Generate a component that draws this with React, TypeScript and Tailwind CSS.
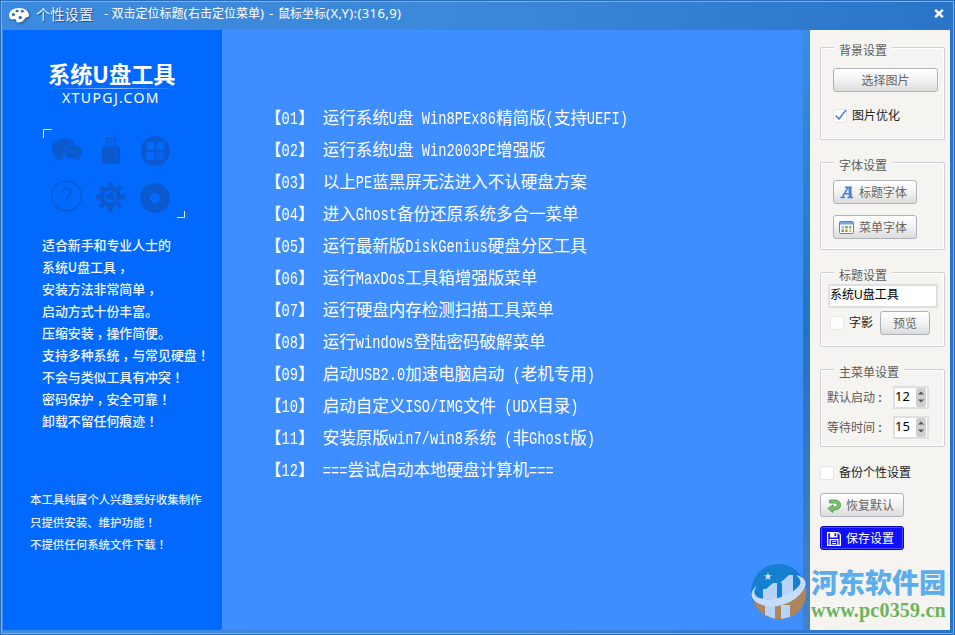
import { useState } from "react";
import type { ReactNode } from "react";
import clsx from "clsx";

const MENU_ITEMS = [
  "运行系统U盘 Win8PEx86精简版(支持UEFI)",
  "运行系统U盘 Win2003PE增强版",
  "以上PE蓝黑屏无法进入不认硬盘方案",
  "进入Ghost备份还原系统多合一菜单",
  "运行最新版DiskGenius硬盘分区工具",
  "运行MaxDos工具箱增强版菜单",
  "运行硬盘内存检测扫描工具菜单",
  "运行windows登陆密码破解菜单",
  "启动USB2.0加速电脑启动 (老机专用)",
  "启动自定义ISO/IMG文件 (UDX目录)",
  "安装原版win7/win8系统 (非Ghost版)",
  "===尝试启动本地硬盘计算机===",
];

const INTRO = [
  "适合新手和专业人士的",
  "系统U盘工具，",
  "安装方法非常简单，",
  "启动方式十份丰富。",
  "压缩安装，操作简便。",
  "支持多种系统，与常见硬盘！",
  "不会与类似工具有冲突！",
  "密码保护，安全可靠！",
  "卸载不留任何痕迹！",
];

const NOTES = [
  "本工具纯属个人兴趣爱好收集制作",
  "只提供安装、维护功能！",
  "不提供任何系统文件下载！",
];

export default function App() {
  const [optimize, setOptimize] = useState(true);
  const [shadow, setShadow] = useState(false);
  const [backup, setBackup] = useState(false);
  const [title, setTitle] = useState("系统U盘工具");
  const [bootIndex, setBootIndex] = useState(12);
  const [timeout, setTimeout] = useState(15);

  return (
    <div className="relative flex h-[635px] w-[955px] flex-col overflow-hidden border border-[#2a6db8] bg-linear-to-r from-[#3c8be0] via-[#3c88d8] to-[#2a74c8] font-['Liberation_Sans','Noto_Sans_CJK_SC',sans-serif] text-xs">
      <div className="flex h-[633px] flex-col border border-[#6cb2f6] pr-[2px] pb-[2px] pl-px">
        <TitleBar />
        <div className="flex h-[600px]">
          <Banner />
          <MenuPreview />
          <div className="w-[7px] shrink-0 bg-linear-to-b from-[#3b8ce2] via-[#2272c6] to-[#4482c4]" />
          <aside className="flex w-[140px] shrink-0 flex-col items-start bg-[#f5f4f1] pt-[17px] pl-[10px] text-[#5c5c5c]">
            <Group title="背景设置" className="h-[93px]">
              <div className="flex flex-col gap-[17px] pt-[8px] pl-[11px]">
                <PushButton className="w-[105px] justify-center">选择图片</PushButton>
                <CheckBox label="图片优化" checked={optimize} onChange={setOptimize} />
              </div>
            </Group>
            <Group title="字体设置" className="mt-[22px] h-[88px]">
              <div className="flex flex-col gap-[11px] pt-[5px] pl-[11px]">
                <PushButton className="w-[84px]" icon={<LetterIcon />}>
                  标题字体
                </PushButton>
                <PushButton className="w-[84px]" icon={<TableIcon />}>
                  菜单字体
                </PushButton>
              </div>
            </Group>
            <Group title="标题设置" className="mt-[22px] h-[75px]">
              <input
                value={title}
                onChange={(e) => setTitle(e.target.value)}
                aria-label="标题"
                className="mt-[-1px] ml-[6px] block h-6 w-[110px] border-2 border-[#dfdfdf] bg-white pb-[6px] text-xs text-black outline-none"
              />
              <div className="mt-[3px] flex items-center gap-[7px] pl-[8px]">
                <CheckBox label="字影" checked={shadow} onChange={setShadow} />
                <PushButton className="w-[50px] justify-center">预览</PushButton>
              </div>
            </Group>
            <Group title="主菜单设置" className="mt-[22px] h-[78px]">
              <div className="flex flex-col gap-[6px] pt-[3px] pl-[5px]">
                <SpinRow label="默认启动" value={bootIndex} onChange={setBootIndex} />
                <SpinRow label="等待时间" value={timeout} onChange={setTimeout} />
              </div>
            </Group>
            <div className="mt-[19px]">
              <CheckBox label="备份个性设置" checked={backup} onChange={setBackup} />
            </div>
            <PushButton className="mt-[13px] w-[84px]" icon={<RestoreIcon />}>
              恢复默认
            </PushButton>
            <PushButton className="mt-[9px] w-[84px]" icon={<SaveIcon />} primary>
              保存设置
            </PushButton>
          </aside>
        </div>
      </div>
      <Watermark />
    </div>
  );
}

function TitleBar() {
  return (
    <header className="flex h-[28px] shrink-0 items-center text-white">
      <svg viewBox="0 0 22 16" className="mt-[-3px] ml-[5px] h-4 w-[22px] drop-shadow-[1px_1px_1px_#1c4f8c]">
        <path
          fillRule="evenodd"
          fill="#fff"
          d="M11 1C5 1 1 4 1 8.500c0 2.500 1.500 4 3.500 4 1.500 0 2.500-.7 3.500.3.800 1-.3 2 1.500 2.600 2.500.6 6-.9 7.500-3.900.8-1.700 4-.9 4-3C21 4 17 1 11 1ZM4 7.500a1.500 1.500 0 1 0 3 0 1.500 1.500 0 1 0-3 0ZM7.500 4a1.600 1.300 0 1 0 3.200 0 1.600 1.300 0 1 0-3.200 0ZM12.700 4.300a1.600 1.300 0 1 0 3.200 0 1.600 1.300 0 1 0-3.200 0ZM10.500 10.500a1.700 1.600 0 1 0 3.400 0 1.700 1.600 0 1 0-3.400 0Z"
        />
      </svg>
      <span className="mt-[-2px] ml-[6px] text-[14.3px] leading-none text-[#e6f1fd] [text-shadow:1px_1px_1px_#1d4e8a]">
        个性设置
      </span>
      <span className="mt-[-5px] ml-[11px] flex items-center font-['Noto_Sans','Noto_Sans_CJK_SC',sans-serif] text-[12px] leading-none whitespace-pre">
        <span className="tracking-[0.2px]">- </span>
        双击定位标题
        <span className="text-[13px] tracking-[0.5px]">(</span>
        右击定位菜单
        <span className="text-[13px] tracking-[0.8px]">) - </span>
        鼠标坐标
        <span className="text-[13px] tracking-[0.4px]">(X,Y):(316,9)</span>
      </span>
      <button type="button" aria-label="关闭" className="mt-[-6px] mr-[7px] ml-auto">
        <svg viewBox="0 0 10 9" className="h-[9px] w-[10px]">
          <path d="M1.200 .8 8.800 8.200M8.800 .8 1.200 8.200" stroke="#fff" strokeWidth="2.400" />
        </svg>
      </button>
    </header>
  );
}

function Banner() {
  return (
    <section className="flex w-[219px] shrink-0 flex-col bg-[#0269fe] font-['Noto_Sans_CJK_SC',sans-serif] text-white">
      <h1 className="mt-[31px] ml-[45px] text-[22.200px] leading-[24px] font-bold whitespace-nowrap">
        系统U盘工具
      </h1>
      <div className="mt-[3px] ml-[48px] h-px w-[125px] bg-linear-to-r from-transparent via-[#9cc6ff] to-transparent" />
      <p className="ml-[59px] font-['Noto_Sans',sans-serif] text-[14px] leading-[18px] tracking-[1.400px]">
        XTUPGJ.COM
      </p>
      <Emblem />
      <div className="mt-[14px] ml-[39px] text-[12.900px] leading-[22px] font-medium text-[#eef6ff]">
        {INTRO.map((line) => (
          <p key={line} className="h-[22px] whitespace-nowrap">
            <CenteredMarks text={line} />
          </p>
        ))}
      </div>
      <div className="mt-[56px] ml-[27px] text-[11.450px] leading-[22.500px] font-medium text-[#e4f0ff]">
        {NOTES.map((line) => (
          <p key={line} className="h-[22.500px] whitespace-nowrap">
            <CenteredMarks text={line} />
          </p>
        ))}
      </div>
    </section>
  );
}

/** Commas and exclamation marks sit in the middle of their cell. */
function CenteredMarks({ text }: { text: string }) {
  return text.split(/([，！])/).map((part, i) =>
    i % 2 === 1 ? (
      <span
        key={i}
        lang="zh-TW"
        className={clsx("font-['Noto_Sans_CJK_TC',sans-serif]", part === "，" && "relative top-[0.3em]")}
      >
        {part}
      </span>
    ) : (
      <span key={i}>{part}</span>
    )
  );
}

function Emblem() {
  return (
    <svg viewBox="42 128 145 92" className="mt-[21px] ml-[39px] h-[92px] w-[145px] shrink-0" fill="#0b59cc">
      <path d="M43.500 138v-8.500H52M177 217.500h7.500V211" fill="none" stroke="#e4f2ff" />
      {/* chat bubbles */}
      <path d="M65 138.500c-7 0-13 4.500-13 10.500 0 3.600 2 6.500 5 8.300l-2.500 3.700 6.500-2.200h2.500a11 11 0 0 1-.5-3c0-6 5.500-10 12.300-10C74.500 141.500 70.500 138.500 65 138.500Z" />
      <path d="M73 144.500c-5 0-9 3.200-9 7.300s4 7.300 9 7.300l3-.4 5 3-1-4.500c1.200-1.300 2-3.200 2-5.400 0-4.100-4-7.300-9-7.300Z" stroke="#0269fe" strokeWidth=".8" />
      <g fill="#0269fe">
        <circle cx="69" cy="151.800" r="1" />
        <circle cx="73" cy="151.800" r="1" />
        <circle cx="77" cy="151.800" r="1" />
      </g>
      {/* flash drive */}
      <path d="M106 138h10v8h-10zM102 148q0-1.500 1.500-1.500h15q1.500 0 1.500 1.500v14.500q0 1.500-1.500 1.500h-15q-1.500 0-1.500-1.500Z" />
      <path d="M107.500 139.500h7v6h-7zM115.500 149h1v11h-1z" fill="#0269fe" />
      <path d="M109 141.500h4v1.500h-4z" />
      {/* app tiles */}
      <circle cx="155.300" cy="151" r="14.700" />
      <g fill="#0269fe">
        <rect x="146.500" y="142" width="8" height="8" rx="1.500" />
        <rect x="156.500" y="142" width="8" height="8" rx="1.500" />
        <rect x="146.500" y="152" width="8" height="8" rx="1.500" />
        <rect x="156.500" y="152" width="8" height="8" rx="1.500" />
      </g>
      <rect x="158" y="153.500" width="5" height="5" rx="1" fill="none" stroke="#0b59cc" />
      {/* help */}
      <circle cx="66.500" cy="196" r="14.800" fill="none" stroke="#0b59cc" strokeWidth="1.400" />
      <path d="M62.500 192.500c0-5.500 8.300-5.500 8.300-.4 0 3.600-4 3.400-4 8M66.800 202.500v2" fill="none" stroke="#0b59cc" strokeWidth="1.600" />
      {/* gear with wrench */}
      <circle cx="110.500" cy="197" r="10.500" />
      <path d="M110.500 182.500v29M96 197h29M100.300 186.800l20.400 20.400M120.700 186.800l-20.400 20.400" stroke="#0b59cc" strokeWidth="4.600" />
      <circle cx="110" cy="196.500" r="6.500" fill="#0269fe" />
      <path d="m110 196 10 9.500" stroke="#0269fe" strokeWidth="5.500" />
      <path d="m109.500 196 10.500 9.500" stroke="#0b59cc" strokeWidth="3.200" strokeLinecap="round" />
      <path d="M105.300 193.500a4.500 4.500 0 0 0 6 5.500 4.500 4.500 0 0 0 1.500-6.500 4.500 4.500 0 0 0-3.500-1.500l1 3.300-2 1.500Z" />
      {/* disc */}
      <circle cx="155" cy="198" r="10" fill="none" stroke="#0b59cc" strokeWidth="9.600" />
    </svg>
  );
}

function MenuPreview() {
  return (
    <main className="w-[581px] shrink-0 bg-[#3e8eff] pt-[71px] pl-[43px] font-['Noto_Sans_CJK_SC',sans-serif] text-[16.500px] leading-[32px] text-white">
      {MENU_ITEMS.map((item, i) => (
        <p key={item} className="h-8 whitespace-pre">
          <MenuText text={`【${String(i + 1).padStart(2, "0")}】 ${item}`} />
        </p>
      ))}
    </main>
  );
}

/** Half-width runs take exactly half of a full-width cell per character. */
function MenuText({ text }: { text: string }) {
  return text.split(/([\x20-\x7e]+)/).map((run, i) =>
    i % 2 === 1 ? (
      <span
        key={i}
        className="inline-block origin-[0_68%] scale-y-[1.320] font-['Liberation_Mono',monospace] text-[13.750px] leading-[16px]"
      >
        {run}
      </span>
    ) : (
      <span key={i}>{run}</span>
    )
  );
}

function Group({ title, className, children }: { title: string; className?: string; children: ReactNode }) {
  return (
    <section
      className={clsx(
        "w-[125px] shrink-0 rounded-[2px] border border-[#d0d0d3] p-px shadow-[inset_0_0_0_1px_#fff]",
        className
      )}
    >
      <h2 className="mt-[-7px] ml-[12px] w-fit bg-[#f5f4f1] px-[5px] leading-[18px] whitespace-nowrap">{title}</h2>
      {children}
    </section>
  );
}

function PushButton({
  children,
  icon,
  primary,
  className,
}: {
  children: ReactNode;
  icon?: ReactNode;
  primary?: boolean;
  className?: string;
}) {
  return (
    <button
      type="button"
      className={clsx(
        "flex h-6 shrink-0 items-center rounded-[3px] border pt-px text-xs leading-none whitespace-nowrap",
        primary
          ? "border-[#0a0ab4] bg-[#0f0ffb] text-white shadow-[inset_0_0_0_1px_#4a4aff]"
          : "border-[#aeb4ba] bg-linear-to-b from-white via-[#f2f2f2] to-[#dcdcdc] text-[#666]",
        className
      )}
    >
      {icon && <span className="ml-[5px] flex w-[20px] shrink-0">{icon}</span>}
      {children}
    </button>
  );
}

function CheckBox({
  label,
  checked,
  onChange,
}: {
  label: string;
  checked: boolean;
  onChange: (v: boolean) => void;
}) {
  return (
    <label className="flex h-[14px] items-center gap-[5px] text-xs leading-none whitespace-nowrap text-[#222]">
      <input
        type="checkbox"
        checked={checked}
        onChange={(e) => onChange(e.target.checked)}
        className="sr-only"
      />
      <svg viewBox="0 0 14 14" className="size-[14px] shrink-0">
        <rect x=".5" y=".5" width="13" height="13" rx="1.500" fill="#fff" stroke="#e6e6e6" />
        {checked && <path d="m2.500 6.500 3.500 3.500L13 1" fill="none" stroke="#5484e4" strokeWidth="1.700" />}
      </svg>
      {label}
    </label>
  );
}

function SpinRow({
  label,
  value,
  onChange,
}: {
  label: string;
  value: number;
  onChange: (v: number) => void;
}) {
  return (
    <div className="flex h-6 items-center">
      <span className="flex w-[66px] gap-[3px] pt-px leading-none">
        {label}
        <span className="font-bold">:</span>
      </span>
      <div className="flex h-[23px] w-[36px] justify-between border-2 border-[#e0dfe0] bg-white pr-px">
        <span className="font-['Noto_Sans',sans-serif] text-[13px] leading-[17px] text-black">{value}</span>
        <div className="flex w-[10px] flex-col items-center justify-around rounded-[2px] bg-[#d0cfce] py-px">
          <button type="button" aria-label="增加" onClick={() => onChange(value + 1)}>
            <svg viewBox="0 0 6 4" className="h-1 w-[6px]">
              <path d="M0 3.500h6L3 .5Z" fill="#555" />
            </svg>
          </button>
          <button type="button" aria-label="减少" onClick={() => onChange(value - 1)}>
            <svg viewBox="0 0 6 4" className="h-1 w-[6px]">
              <path d="M0 .5h6L3 3.500Z" fill="#555" />
            </svg>
          </button>
        </div>
      </div>
    </div>
  );
}

function LetterIcon() {
  return (
    <svg viewBox="0 0 14 13" className="ml-px h-[13px] w-[14px]" fill="none" stroke="#4d82d6">
      <path d="M5 1.300h7M.5 11.500h4.500M7.500 11.500h5.500" strokeWidth="1.600" />
      <path d="M8 1.500 2.500 11M5 7.800h5" strokeWidth="1.500" />
      <path d="m9.800 1 .6 10" strokeWidth="3" />
    </svg>
  );
}

function TableIcon() {
  return (
    <svg viewBox="0 0 15 13" className="h-[13px] w-[15px]">
      <rect x=".5" y=".5" width="14" height="12" rx="1" fill="#fff" stroke="#5d83ba" />
      <path d="M1 1h13v2.500H1z" fill="#74a5e0" />
      <path d="M2.500 5h2.500v2.500H2.500z" fill="#8cc4f0" />
      <path d="M6.200 5h2.500v2.500H6.200zM2.500 8.500h2.500V11H2.500z" fill="#62ad51" />
      <path d="M10 5h2.500v2.500H10z" fill="#90bd5a" />
      <path d="M6.200 8.500h2.500V11H6.200z" fill="#ee7d36" />
      <path d="M10 8.500h2.500V11H10z" fill="#edc24b" />
    </svg>
  );
}

function RestoreIcon() {
  return (
    <svg viewBox="0 0 15 14" className="ml-px h-[14px] w-[15px]">
      <path
        d="M2.500 1H8c3.500 0 5.500 2 5.500 5S11.500 11 8 11H6v2.500L.8 9.500 6 5.800V8h1.500c1.700 0 2.700-.7 2.700-2S9.200 4 7.500 4h-5Z"
        fill="#7cc070"
        stroke="#4a9448"
        strokeWidth=".8"
      />
    </svg>
  );
}

function SaveIcon() {
  return (
    <svg viewBox="0 0 14 14" className="ml-px h-[14px] w-[14px]">
      <path
        fillRule="evenodd"
        fill="#fff"
        d="M0 0h11.500L14 2.500V14H0ZM1.300 1.300v11.400h1.200V7h9v5.700h1.200V3L11 1.300h-.5V5.500H3V1.300ZM7.500 1.300V4.300h1.700v-3ZM3.800 8.200v4.500h6.400V8.200ZM5 9.200h4v.9H5ZM5 11h4v.9H5Z"
      />
    </svg>
  );
}

function Watermark() {
  return (
    <div className="pointer-events-none absolute top-[562px] left-[748px] flex items-start">
      <svg viewBox="0 0 58 58" className="h-[58px] w-[58px]">
        <circle cx="29.500" cy="28.500" r="27.500" fill="#167fd2" />
        <path d="M4 38c16 10 38 4 53-14 2 17-8 32-27 32C17 56 8 49 4 38Z" fill="#ae845d" />
        <path d="M14 36V26h3l7-6h4v16ZM33 36V20h-2l9-8h4v22ZM16 42h10v14l-10-4ZM32 42h9v12l-9 2Z" fill="#b5d4f8" />
        <path d="M8 23C0 28 0 38 13 42c15 5 36-3 43-18 2-6-1-10-9-12 5 4 6 8 2 12-8 9-23 13-34 12C5 35 3 29 8 23Z" fill="#c5dcfa" />
        <path d="m19 9.500 1 2.800h3l-2.400 1.800.9 2.900-2.500-1.700-2.500 1.700.9-2.900L15 12.300h3Z" fill="#d5e6fa" />
      </svg>
      <div className="ml-[4px] whitespace-nowrap">
        <p className="mt-[5px] font-['Noto_Sans_CJK_SC',sans-serif] text-[27px] leading-[28px] font-black text-[#5badec]">
          河东软件园
        </p>
        <p className="mt-[4px] font-['Liberation_Serif',serif] text-[20px] leading-[21px] font-bold tracking-[0.2px] text-[#6cb35c]">
          www.pc0359.cn
        </p>
      </div>
    </div>
  );
}
